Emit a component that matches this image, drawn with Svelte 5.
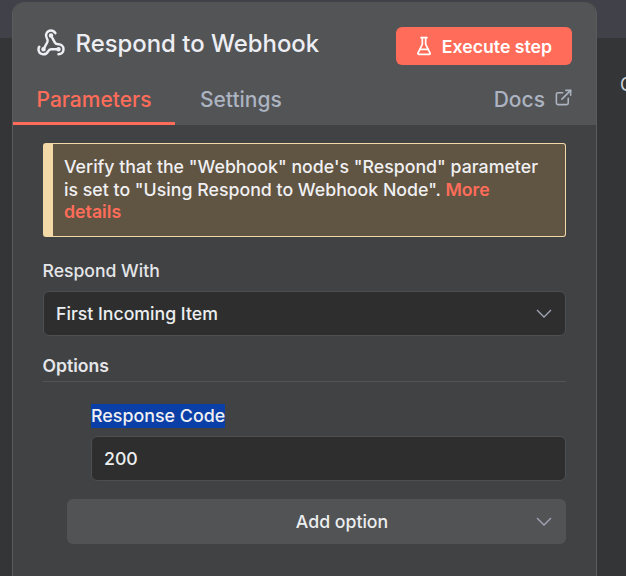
<script>
  // Node details panel: Respond to Webhook
  const responseCode = "200";
  const respondWith = "First Incoming Item";
</script>

<div class="page">
  <div class="topbar"></div>
  <span class="edge-letter">C</span>
  <section class="panel">
    <header class="head">
      <div class="title-row">
        <svg class="node-icon" viewBox="0 0 24 24" fill="none" stroke="currentColor" stroke-width="2" stroke-linecap="round" stroke-linejoin="round">
          <path d="M18 16.98h-5.99c-1.1 0-1.95.94-2.48 1.9A4 4 0 0 1 2 17c.01-.7.2-1.4.57-2" />
          <path d="m6 17 3.13-5.78c.53-.97.1-2.18-.5-3.1a4 4 0 1 1 6.89-4.06" />
          <path d="m12 6 3.13 5.73C15.66 12.7 16.9 13 18 13a4 4 0 0 1 0 8" />
          <circle cx="6" cy="17" r="0.8" />
          <circle cx="12" cy="6" r="0.8" />
          <circle cx="18" cy="17" r="0.8" />
        </svg>
        <h1>Respond to Webhook</h1>
        <button class="execute">
          <svg viewBox="0 0 24 24" fill="none" stroke="currentColor" stroke-width="2" stroke-linecap="round" stroke-linejoin="round">
            <path d="M10 2v7.53a2 2 0 0 1-.21.9L4.72 20.55A1 1 0 0 0 5.61 22h12.78a1 1 0 0 0 .9-1.45l-5.07-10.12a2 2 0 0 1-.22-.9V2" />
            <path d="M8.5 2h7" />
            <path d="M7 16h10" />
          </svg>
          Execute step
        </button>
      </div>
      <nav class="tabs">
        <span class="tab active">Parameters</span>
        <span class="tab settings">Settings</span>
        <span class="tab docs">
          Docs
          <svg viewBox="0 0 24 24" fill="none" stroke="currentColor" stroke-width="2" stroke-linecap="round" stroke-linejoin="round">
            <path d="M15 3h6v6" />
            <path d="M10 14 21 3" />
            <path d="M18 13v6a2 2 0 0 1-2 2H5a2 2 0 0 1-2-2V8a2 2 0 0 1 2-2h6" />
          </svg>
        </span>
      </nav>
    </header>

    <div class="body">
      <div class="notice">
        Verify that the "Webhook" node's "Respond" parameter is set to "Using Respond to Webhook Node". <a href="#details">More details</a>
      </div>

      <label class="field-label" for="respond">Respond With</label>
      <div class="control" id="respond">
        <span>{respondWith}</span>
        <svg class="chev" viewBox="0 0 16 9" fill="none" stroke="currentColor" stroke-width="1.3"><path d="M1 1l7 7 7-7" /></svg>
      </div>

      <div class="options-title">Options</div>
      <div class="option">
        <div class="code-label"><span class="selected">Response Code</span></div>
        <div class="control"><span>{responseCode}</span></div>
      </div>
      <div class="add">
        <span>Add option</span>
        <svg class="chev" viewBox="0 0 16 9" fill="none" stroke="currentColor" stroke-width="1.3"><path d="M1 1l7 7 7-7" /></svg>
      </div>
    </div>
  </section>
</div>

<style>
  :global(body) {
    margin: 0;
    background: #2f3030;
    font-family: Inter, "Noto Sans", sans-serif;
  }

  .page {
    position: relative;
    width: 626px;
    height: 576px;
    overflow: hidden;
    padding: 2px 0 0 12px;
    box-sizing: border-box;
    background: #343536;
  }

  .topbar {
    position: absolute;
    left: 0;
    right: 0;
    top: 0;
    height: 38px;
    background: #414149;
  }

  .edge-letter {
    position: absolute;
    left: 620px;
    top: 74px;
    font-size: 18px;
    color: #d0d3da;
  }

  .panel {
    position: relative;
    width: 585px;
    height: 600px;
    box-sizing: border-box;
    background: #414243;
    border-radius: 12px 12px 0 0;
    border-right: 1px solid #5a5b5d;
    border-left: 1px solid #5a5b5d;
  }

  .head {
    background: #535455;
    height: 123px;
    border-radius: 12px 12px 0 0;
    box-sizing: border-box;
    padding: 25px 24px 0 0;
  }

  .title-row {
    display: flex;
    align-items: center;
    padding-left: 22.5px;
    height: 38px;
  }

  .node-icon {
    width: 30px;
    height: 30px;
    color: #eceef4;
    margin: 0 10px 6px 0;
  }

  h1 {
    margin: 0 0 6px;
    font-size: 23.9px;
    font-weight: 500;
    color: #eceef4;
    flex: 1;
  }

  .execute {
    display: flex;
    align-items: center;
    justify-content: center;
    gap: 8px;
    width: 176px;
    height: 38px;
    padding: 0 2px 0 0;
    border: 0;
    border-radius: 6px;
    background: #ff6d5a;
    color: #fff;
    font: 600 17.7px Inter, sans-serif;
  }

  .execute svg {
    width: 20px;
    height: 20px;
  }

  .tabs {
    display: flex;
    align-items: flex-end;
    margin-top: 14px;
    height: 46px;
  }

  .tab {
    padding: 0 24px;
    height: 46px;
    box-sizing: border-box;
    line-height: 42px;
    font-size: 21px;
    font-weight: 500;
    color: #acb3c1;
  }

  .tab.active {
    padding-left: 23.5px;
    color: #ff6d5a;
    border-bottom: 3px solid #ff6d5a;
  }

  .tab.settings {
    padding-left: 24.5px;
  }

  .tab.docs {
    margin: 0 -1px 0 auto;
    padding: 0;
    display: flex;
    align-items: flex-start;
    gap: 9px;
  }

  .docs svg {
    width: 19px;
    height: 19px;
    margin-top: 9px;
  }

  .body {
    padding: 18px 0 0 30px;
    width: 523px;
  }

  .notice {
    box-sizing: border-box;
    height: 94px;
    padding: 12px 20px 0 11px;
    background: #605442;
    border: 1px solid #f3d8a8;
    border-left: 10px solid #f3d8a8;
    border-radius: 3px;
    color: #f0f0f2;
    font-size: 17.75px;
    font-weight: 500;
    line-height: 22.5px;
  }

  .notice a {
    color: #ff6d5a;
    font-weight: 600;
    text-decoration: none;
  }

  .field-label {
    display: block;
    margin: 23px 0 9px -0.5px;
    color: #e5e6ea;
    font-size: 17.6px;
    font-weight: 500;
    line-height: 22px;
  }

  .control {
    display: flex;
    align-items: center;
    justify-content: space-between;
    box-sizing: border-box;
    height: 45px;
    padding: 0 13px 0 12px;
    background: #2d2e2d;
    border: 1px solid #4e4f50;
    border-radius: 6px;
    color: #eceef0;
    font-size: 17.7px;
    font-weight: 500;
  }

  .chev {
    width: 16px;
    height: 9px;
    color: #a2a8b8;
  }

  .options-title {
    margin-top: 18px;
    margin-left: -0.5px;
    padding-bottom: 3px;
    border-bottom: 1px solid #535455;
    color: #e5e6ea;
    font-size: 17.6px;
    font-weight: 600;
    line-height: 24px;
  }

  .option {
    margin: 22px 0 0 48px;
  }

  .code-label {
    margin-bottom: 8px;
    height: 24px;
    line-height: 24px;
    font-size: 17.85px;
    font-weight: 500;
    color: #f0f0f2;
  }

  .selected {
    display: inline-block;
    background: #0b3fa8;
  }

  .add {
    position: relative;
    display: flex;
    align-items: center;
    justify-content: center;
    box-sizing: border-box;
    margin: 18px 0 0 24px;
    padding-left: 51px;
    height: 45px;
    background: #525354;
    border-radius: 6px;
    color: #eceef0;
    font-size: 17.7px;
    font-weight: 500;
  }

  .add .chev {
    position: absolute;
    right: 14px;
    top: 18px;
  }
</style>
